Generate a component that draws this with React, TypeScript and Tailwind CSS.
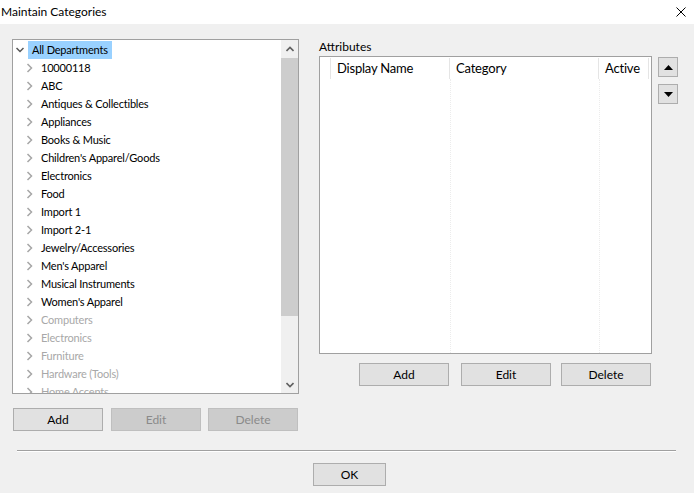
import React from "react";

const active = [
  "10000118",
  "ABC",
  "Antiques & Collectibles",
  "Appliances",
  "Books & Music",
  "Children's Apparel/Goods",
  "Electronics",
  "Food",
  "Import 1",
  "Import 2-1",
  "Jewelry/Accessories",
  "Men's Apparel",
  "Musical Instruments",
  "Women's Apparel",
];
const inactive = ["Computers", "Electronics", "Furniture", "Hardware (Tools)", "Home Accents"];

function Chevron() {
  return (
    <svg width="8" height="10" viewBox="0 0 8 10" className="shrink-0">
      <path d="M1.5 1 L5.5 5 L1.5 9" fill="none" stroke="#a6a6a6" strokeWidth="1.5" />
    </svg>
  );
}

function Row({ label, dim }: { label: string; dim?: boolean }) {
  return (
    <div className="h-[18px] flex items-center pl-[13px] shrink-0">
      <Chevron />
      <span className={"ml-[7px] whitespace-nowrap " + (dim ? "text-[#a8a8a8]" : "text-black")}>{label}</span>
    </div>
  );
}

function Btn({ label, disabled, w = "w-[90px]" }: { label: string; disabled?: boolean; w?: string }) {
  return (
    <div
      className={
        w +
        " h-[23px] flex items-center justify-center border text-[12px] tracking-normal " +
        (disabled ? "bg-[#cccccc] border-[#bfbfbf] text-[#8a8a8a]" : "bg-[#e1e1e1] border-[#adadad] text-black")
      }
    >
      {label}
    </div>
  );
}

export default function App() {
  return (
    <div className="w-[694px] h-[493px] flex flex-col bg-[#f0f0f0] text-[12px] font-['Lato',sans-serif] overflow-hidden">
      <div className="h-[24px] bg-white flex items-center justify-between shrink-0">
        <span className="pl-[1px] text-black">Maintain Categories</span>
        <svg width="10" height="10" viewBox="0 0 10 10" className="mr-[8px]">
          <path d="M0.5 0.5 L9.5 9.5 M9.5 0.5 L0.5 9.5" stroke="#000" strokeWidth="1" />
        </svg>
      </div>
      <div className="flex pt-[15px] pl-[12px]">
        <div className="w-[287px] flex flex-col">
          <div className="h-[355px] border border-[#a0a0a0] bg-white flex">
            <div className="flex-1 flex flex-col overflow-hidden text-[11px] tracking-[-0.2px]">
              <div className="h-[18px] flex items-center shrink-0 mt-[1px]">
                <svg width="8" height="6" viewBox="0 0 8 6" className="ml-[3px] shrink-0">
                  <path d="M0.5 1 L4 4.5 L7.5 1" fill="none" stroke="#555" strokeWidth="1.5" />
                </svg>
                <span className="ml-[4px] h-[18px] px-[4px] flex items-center bg-[#99d1ff] whitespace-nowrap">All Departments</span>
              </div>
              {active.map((l, i) => (
                <Row key={"a" + i} label={l} />
              ))}
              {inactive.map((l, i) => (
                <Row key={"d" + i} label={l} dim />
              ))}
            </div>
            <div className="w-[17px] flex flex-col bg-[#f0f0f0] shrink-0">
              <div className="h-[18px] flex items-center justify-center">
                <svg width="8" height="6" viewBox="0 0 8 6">
                  <path d="M0.5 5 L4 1.5 L7.5 5" fill="none" stroke="#606060" strokeWidth="1.6" />
                </svg>
              </div>
              <div className="h-[258px] bg-[#cdcdcd]" />
              <div className="flex-1" />
              <div className="h-[17px] flex items-center justify-center">
                <svg width="8" height="6" viewBox="0 0 8 6">
                  <path d="M0.5 1 L4 4.5 L7.5 1" fill="none" stroke="#606060" strokeWidth="1.6" />
                </svg>
              </div>
            </div>
          </div>
          <div className="flex mt-[14px] pl-[1px] gap-[8px]">
            <Btn label="Add" />
            <Btn label="Edit" disabled />
            <div className="ml-[-1px]">
              <Btn label="Delete" disabled />
            </div>
          </div>
        </div>
        <div className="ml-[20px] flex flex-col">
          <div className="h-[14px] leading-[14px] pt-[1px]">Attributes</div>
          <div className="mt-[3px] w-[333px] h-[298px] border border-[#a0a0a0] bg-white flex flex-col">
            <div className="h-[22px] flex text-[13px] tracking-[-0.2px] shrink-0 pt-[1px]">
              <div className="w-[11px] border-r border-[#e5e5e5]" />
              <div className="w-[119px] border-r border-[#e5e5e5] pl-[6px] flex items-center">Display Name</div>
              <div className="w-[149px] border-r border-[#e5e5e5] pl-[6px] flex items-center">Category</div>
              <div className="w-[50px] border-r border-[#e5e5e5] pl-[6px] flex items-center">Active</div>
            </div>
            <div className="flex-1 flex">
              <div className="w-[130px]" />
              <div className="w-[149px] border-l border-dotted border-[#ececec]" />
              <div className="border-l border-dotted border-[#ececec]" />
            </div>
          </div>
          <div className="flex mt-[9px] pl-[40px]">
            <Btn label="Add" />
            <div className="ml-[12px]">
              <Btn label="Edit" />
            </div>
            <div className="ml-[10px]">
              <Btn label="Delete" />
            </div>
          </div>
        </div>
        <div className="ml-[6px] pt-[18px] flex flex-col gap-[7px]">
          <div className="w-[20px] h-[20px] bg-[#e1e1e1] border border-[#adadad] flex items-center justify-center">
            <svg width="9" height="5" viewBox="0 0 9 5">
              <path d="M0 5 L4.5 0 L9 5 Z" fill="#000" />
            </svg>
          </div>
          <div className="w-[20px] h-[20px] bg-[#e1e1e1] border border-[#adadad] flex items-center justify-center">
            <svg width="9" height="5" viewBox="0 0 9 5">
              <path d="M0 0 L9 0 L4.5 5 Z" fill="#000" />
            </svg>
          </div>
        </div>
      </div>
      <div className="mt-[19px] ml-[17px] w-[659px] h-[2px] border-t border-[#a0a0a0] border-b border-b-white" />
      <div className="mt-[11px] ml-[313px]">
        <Btn label="OK" w="w-[73px]" />
      </div>
    </div>
  );
}
